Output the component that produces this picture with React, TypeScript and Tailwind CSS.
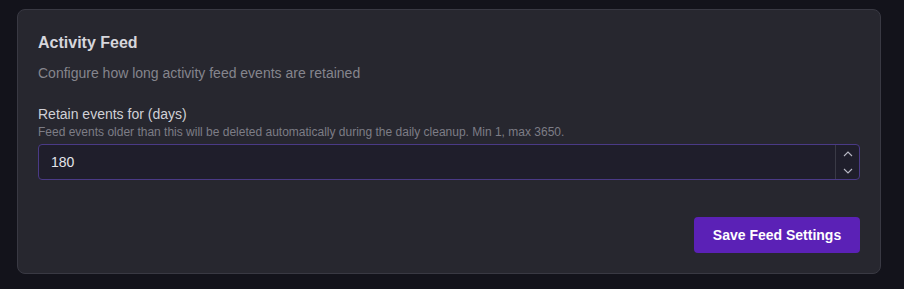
export default function App() {
  return (
    <div className="w-[904px] h-[289px] bg-[#13131b] pt-[9px] px-[17px]" style={{ fontFamily: '"Liberation Sans", Arial, sans-serif' }}>
      <div className="w-[864px] h-[265px] rounded-lg border border-[#393943] bg-[#27272f] px-5 pt-[21px] pb-5 flex flex-col">
        <h2 className="text-[16px] leading-6 font-bold text-[#d6d6dc]">Activity Feed</h2>
        <p className="mt-[8px] text-[14px] leading-5 text-[#85858d]">Configure how long activity feed events are retained</p>
        <label className="mt-[21px] text-[14px] leading-5 text-[#d0d0d6]">Retain events for (days)</label>
        <p className="text-[12px] leading-4 text-[#7d7d86]">Feed events older than this will be deleted automatically during the daily cleanup. Min 1, max 3650.</p>
        <div className="mt-[4px] h-[36px] w-full rounded-[4px] border border-[#4a3a86] bg-[#1f1e2b] flex items-stretch">
          <div className="flex-1 flex items-center pl-3 text-[14px] text-[#e4e4ea]">180</div>
          <div className="w-[24px] border-l border-[#3a3a46] flex flex-col items-center justify-center gap-[11px]">
            <svg width="10" height="6" viewBox="0 0 10 6" fill="none" stroke="#b8b8c4" strokeWidth="1.1"><path d="M1 5 L5 1 L9 5" /></svg>
            <svg width="10" height="6" viewBox="0 0 10 6" fill="none" stroke="#b8b8c4" strokeWidth="1.1"><path d="M1 1 L5 5 L9 1" /></svg>
          </div>
        </div>
        <div className="mt-auto flex justify-end">
          <button className="h-[36px] w-[166px] rounded-[4px] bg-[#5b21b6] text-white text-[14px] font-bold">Save Feed Settings</button>
        </div>
      </div>
    </div>
  );
}
